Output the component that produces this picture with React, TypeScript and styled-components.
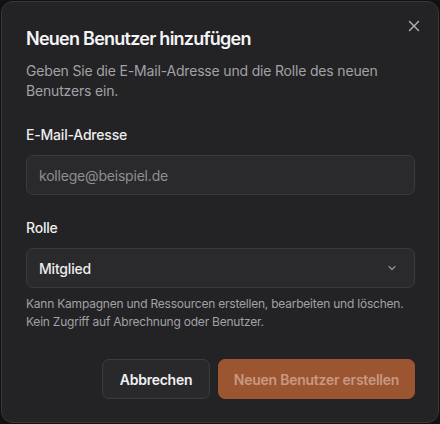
import React from "react";
import styled, { createGlobalStyle } from "styled-components";

const Global = createGlobalStyle`
  html, body { margin: 0; padding: 0; background: #111112; }
  body { font-family: Inter, "Noto Sans", sans-serif; -webkit-font-smoothing: antialiased; }
  * { box-sizing: border-box; }
`;

const Page = styled.div`
  width: 440px;
  height: 424px;
  display: flex;
  align-items: center;
  justify-content: center;
`;

const Dialog = styled.div`
  position: relative;
  width: 438px;
  height: 422px;
  background: #232325;
  border: 1px solid #38383b;
  border-radius: 12px;
  padding: 23px 23px 23px 24px;
  display: flex;
  flex-direction: column;
`;

const Close = styled.button`
  position: absolute;
  top: 16px;
  right: 16px;
  width: 16px;
  height: 16px;
  padding: 0;
  border: none;
  background: transparent;
  color: #b4b4b8;
  display: flex;
  align-items: center;
  justify-content: center;
`;

const Title = styled.h2`
  margin: 0;
  font-size: 18px;
  line-height: 28px;
  font-weight: 600;
  color: #f4f4f5;
  letter-spacing: -0.75px;
`;

const Description = styled.p`
  margin: 8px 0 0;
  font-size: 14px;
  line-height: 20px;
  color: #a1a1a6;
  letter-spacing: -0.18px;
  padding-right: 10px;
`;

const Field = styled.div<{ $top: number }>`
  margin-top: ${(p) => p.$top}px;
  display: flex;
  flex-direction: column;
  gap: 10px;
`;

const Label = styled.label`
  font-size: 14px;
  line-height: 20px;
  font-weight: 500;
  color: #ededee;
  letter-spacing: -0.2px;
`;

const Input = styled.input`
  height: 40px;
  width: 100%;
  border-radius: 7px;
  border: 1px solid #3a3a3d;
  background: #2a2a2d;
  padding: 0 12px;
  font-family: inherit;
  font-size: 14px;
  letter-spacing: -0.2px;
  color: #ededee;
  outline: none;
  &::placeholder { color: #8e8e93; }
`;

const Select = styled.div`
  height: 40px;
  border-radius: 7px;
  border: 1px solid #3a3a3d;
  background: #2a2a2d;
  padding: 0 16px 0 12px;
  display: flex;
  align-items: center;
  justify-content: space-between;
  font-size: 14px;
  font-weight: 500;
  letter-spacing: -0.2px;
  color: #ededee;
`;

const Help = styled.p`
  margin: -3px 0 0;
  font-size: 12px;
  line-height: 18px;
  color: #a1a1a6;
  letter-spacing: -0.22px;
`;

const Footer = styled.div`
  margin-top: auto;
  display: flex;
  justify-content: flex-end;
  gap: 8px;
`;

const Button = styled.button<{ $primary?: boolean }>`
  height: 40px;
  padding: 0;
  border-radius: 7px;
  font-family: inherit;
  font-size: 14px;
  font-weight: 600;
  letter-spacing: -0.25px;
  white-space: nowrap;
  border: 1px solid ${(p) => (p.$primary ? "#9c5531" : "#3c3c40")};
  background: ${(p) => (p.$primary ? "#9c5531" : "#29292c")};
  color: ${(p) => (p.$primary ? "#c79984" : "#f1f1f2")};
  width: ${(p) => (p.$primary ? "197px" : "108px")};
`;

export default function App() {
  return (
    <>
      <Global />
      <Page>
        <Dialog>
          <Close aria-label="Schließen">
            <svg width="12" height="12" viewBox="0 0 12 12" fill="none">
              <path d="M1.5 1.5l9 9M10.5 1.5l-9 9" stroke="currentColor" strokeWidth="1.4" strokeLinecap="round" />
            </svg>
          </Close>
          <Title>Neuen Benutzer hinzufügen</Title>
          <Description>
            Geben Sie die E-Mail-Adresse und die Rolle des neuen Benutzers ein.
          </Description>
          <Field $top={24}>
            <Label>E-Mail-Adresse</Label>
            <Input placeholder="kollege@beispiel.de" />
          </Field>
          <Field $top={23}>
            <Label>Rolle</Label>
            <Select>
              <span>Mitglied</span>
              <svg width="12" height="12" viewBox="0 0 12 12" fill="none">
                <path d="M3 4.5l3 3 3-3" stroke="#8e8e93" strokeWidth="1.3" strokeLinecap="round" strokeLinejoin="round" />
              </svg>
            </Select>
            <Help>
              Kann Kampagnen und Ressourcen erstellen, bearbeiten und löschen. Kein Zugriff auf Abrechnung oder Benutzer.
            </Help>
          </Field>
          <Footer>
            <Button>Abbrechen</Button>
            <Button $primary disabled>Neuen Benutzer erstellen</Button>
          </Footer>
        </Dialog>
      </Page>
    </>
  );
}
